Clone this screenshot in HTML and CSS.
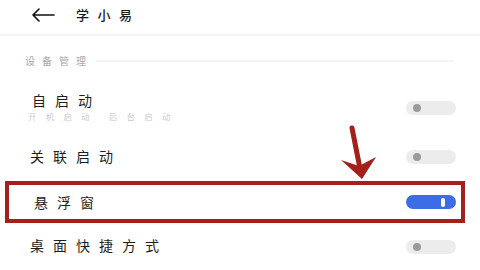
FILE: index.html
```html
<!DOCTYPE html>
<html lang="zh-CN">
<head>
<meta charset="utf-8">
<title>学小易</title>
<link rel="stylesheet" href="styles.css">
</head>
<body>
<div class="screen">
  <header class="topbar">
    <svg class="back" width="24" height="14" viewBox="0 0 24 14">
      <path d="M23 7H2M8 1L2 7l6 6" fill="none" stroke="#111" stroke-width="1.6" stroke-linecap="round" stroke-linejoin="round"/>
    </svg>
    <h1 class="title">学小易</h1>
  </header>

  <div class="section">
    <span class="section-label">设备管理</span>
    <span class="section-line"></span>
  </div>

  <div class="row row-first">
    <div class="row-text">
      <div class="row-title row-title-compact">自启动</div>
      <div class="row-sub"><span>开机启动</span><span>后台启动</span></div>
    </div>
    <span class="toggle"><span class="knob"></span></span>
  </div>

  <div class="row row-second">
    <div class="row-title">关联启动</div>
    <span class="toggle"><span class="knob"></span></span>
  </div>

  <div class="row row-highlight">
    <div class="row-title">悬浮窗</div>
    <span class="toggle toggle-on"><span class="knob"></span></span>
  </div>

  <div class="row row-fourth">
    <div class="row-title">桌面快捷方式</div>
    <span class="toggle"><span class="knob"></span></span>
  </div>

  <svg class="annotation" width="480" height="270" viewBox="0 0 480 270">
    <line x1="352" y1="128" x2="359.5" y2="166" stroke="#a51f1b" stroke-width="5" stroke-linecap="round"/>
    <polygon points="341,160 359,166 376,157 362,179" fill="#a51f1b"/>
  </svg>
</div>
</body>
</html>
```

FILE: styles.css
```css
* { box-sizing: border-box; margin: 0; padding: 0; }

body {
  margin: 0;
  background: #ffffff;
  font-family: "Noto Sans CJK SC", "Noto Sans", sans-serif;
  color: #1e1e1e;
}

.screen {
  position: relative;
  width: 480px;
  height: 270px;
  overflow: hidden;
  background: #ffffff;
}

.topbar {
  height: 36px;
  display: flex;
  align-items: center;
  padding-left: 31px;
  padding-bottom: 4px;
  border-bottom: 2px solid #f5f5f5;
}

.back { display: block; }

.title {
  margin-left: 21px;
  font-size: 13px;
  font-weight: 500;
  letter-spacing: 8.5px;
  line-height: 16px;
  color: #1a1a1a;
}

.section {
  height: 50px;
  display: flex;
  align-items: center;
  padding-left: 25px;
  padding-right: 27px;
}

.section-label {
  font-size: 10px;
  letter-spacing: 7px;
  color: #a8a8a8;
  line-height: 12px;
}

.section-line {
  flex: 1;
  height: 2px;
  margin-left: 3px;
  background: #f4f4f4;
}

.row {
  display: flex;
  align-items: center;
  justify-content: space-between;
  padding-left: 32px;
  padding-right: 24px;
}

.row-title {
  font-size: 14px;
  letter-spacing: 9px;
  line-height: 16px;
  color: #1e1e1e;
}

.row-title-compact { line-height: 20px; }

.row-first { height: 44px; }

.row-text { padding-bottom: 5px; }

.row-sub {
  display: flex;
  gap: 10px;
  margin-left: -4px;
  font-size: 8.5px;
  letter-spacing: 9.2px;
  line-height: 12px;
  color: #cbcbcb;
}

.row-second { height: 51px; padding-left: 30px; }
.row-second .toggle { margin-top: 3px; }

.row-highlight {
  height: 42px;
  margin-left: 5px;
  margin-right: 15px;
  padding-left: 25px;
  padding-right: 5px;
  border: 4px solid #a51f1b;
}

.row-fourth { height: 44px; padding-left: 30px; }
.row-fourth .toggle { margin-top: 3px; }

.toggle {
  position: relative;
  display: block;
  width: 50px;
  height: 14px;
  border-radius: 7px;
  background: #ececec;
}

.knob {
  position: absolute;
  left: 7px;
  top: 3px;
  width: 8px;
  height: 8px;
  border-radius: 50%;
  background: #9b9b9b;
}

.toggle-on { background: #3d6de4; }

.toggle-on .knob {
  left: 35px;
  top: 2.5px;
  width: 4px;
  height: 9px;
  border-radius: 2px;
  background: #ffffff;
}

.annotation {
  position: absolute;
  left: 0;
  top: 0;
  pointer-events: none;
}
```
